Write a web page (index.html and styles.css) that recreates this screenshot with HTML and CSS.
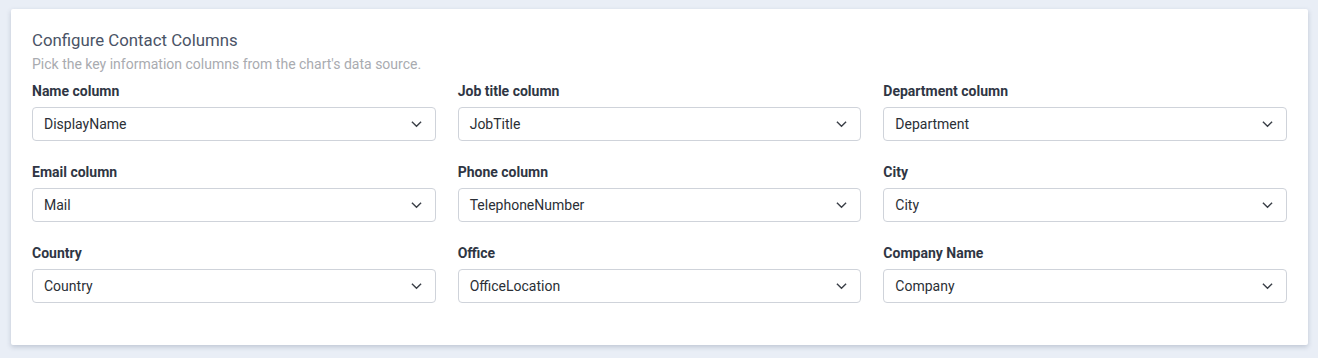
FILE: index.html
```html
<!DOCTYPE html>
<html lang="en">
<head>
<meta charset="utf-8">
<title>Configure Contact Columns</title>
<link rel="stylesheet" href="styles.css">
</head>
<body>
<div class="card">
  <h2 class="title">Configure Contact Columns</h2>
  <p class="subtitle">Pick the key information columns from the chart's data source.</p>
  <div class="grid">
    <div class="field"><label class="label">Name column</label><div class="select"><span>DisplayName</span><svg class="chev" viewBox="0 0 12 8"><path d="M1 1.5 6 6.5 11 1.5"/></svg></div></div>
    <div class="field"><label class="label">Job title column</label><div class="select"><span>JobTitle</span><svg class="chev" viewBox="0 0 12 8"><path d="M1 1.5 6 6.5 11 1.5"/></svg></div></div>
    <div class="field"><label class="label">Department column</label><div class="select"><span>Department</span><svg class="chev" viewBox="0 0 12 8"><path d="M1 1.5 6 6.5 11 1.5"/></svg></div></div>
    <div class="field"><label class="label">Email column</label><div class="select"><span>Mail</span><svg class="chev" viewBox="0 0 12 8"><path d="M1 1.5 6 6.5 11 1.5"/></svg></div></div>
    <div class="field"><label class="label">Phone column</label><div class="select"><span>TelephoneNumber</span><svg class="chev" viewBox="0 0 12 8"><path d="M1 1.5 6 6.5 11 1.5"/></svg></div></div>
    <div class="field"><label class="label">City</label><div class="select"><span>City</span><svg class="chev" viewBox="0 0 12 8"><path d="M1 1.5 6 6.5 11 1.5"/></svg></div></div>
    <div class="field"><label class="label">Country</label><div class="select"><span>Country</span><svg class="chev" viewBox="0 0 12 8"><path d="M1 1.5 6 6.5 11 1.5"/></svg></div></div>
    <div class="field"><label class="label">Office</label><div class="select"><span>OfficeLocation</span><svg class="chev" viewBox="0 0 12 8"><path d="M1 1.5 6 6.5 11 1.5"/></svg></div></div>
    <div class="field"><label class="label">Company Name</label><div class="select"><span>Company</span><svg class="chev" viewBox="0 0 12 8"><path d="M1 1.5 6 6.5 11 1.5"/></svg></div></div>
  </div>
</div>
</body>
</html>
```
FILE: styles.css
```css
html, body {
  margin: 0;
  padding: 0;
}
body {
  background: #e9eef6;
  font-family: Roboto, "Liberation Sans", sans-serif;
  padding: 9px 10px 12px 11px;
}
.card {
  background: #ffffff;
  border-radius: 2px;
  box-shadow: 0 2px 5px rgba(40, 60, 90, 0.22);
  padding: 20px 21px 43px 21px;
  height: 336px;
  box-sizing: border-box;
}
.title {
  margin: 0;
  font-size: 16.8px;
  font-weight: 400;
  line-height: 22px;
  color: #4a5366;
}
.subtitle {
  margin: 4px 0 0;
  font-size: 14px;
  line-height: 18px;
  color: #a9abb0;
}
.grid {
  margin-top: 9px;
  display: grid;
  grid-template-columns: repeat(3, 1fr);
  column-gap: 22px;
  row-gap: 22px;
}
.field {
  display: flex;
  flex-direction: column;
}
.label {
  font-size: 14px;
  font-weight: 700;
  line-height: 18px;
  color: #2f3644;
  margin-bottom: 7px;
}
.select {
  height: 34px;
  box-sizing: border-box;
  border: 1px solid #cfd3da;
  border-radius: 4px;
  display: flex;
  align-items: center;
  justify-content: space-between;
  padding: 0 13px 0 11px;
  font-size: 14px;
  color: #2b2f36;
}
.chev {
  width: 11px;
  height: 8px;
  fill: none;
  stroke: #3a3f47;
  stroke-width: 1.5;
}
```
